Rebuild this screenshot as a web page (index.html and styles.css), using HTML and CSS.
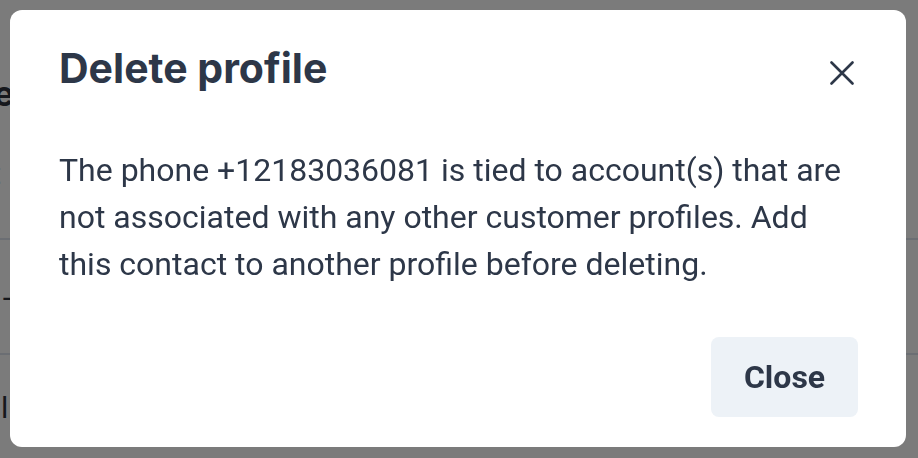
FILE: index.html
```html
<!DOCTYPE html>
<html lang="en">
<head>
    <meta charset="UTF-8">
    <meta name="viewport" content="width=device-width, initial-scale=1.0">
    <title>Delete profile</title>
    <link rel="stylesheet" href="styles.css">
</head>
<body>
    <div class="page">
        <div class="page-title">Profile</div>
        <div class="page-row row-one">Contact</div>
        <div class="page-row row-two">– –</div>
        <div class="page-row row-three">linked</div>
    </div>

    <div class="overlay">
        <div class="modal">
            <div class="modal-header">
                <h2 class="modal-title">Delete profile</h2>
                <button class="close-x" aria-label="Close">
                    <svg width="24" height="24" viewBox="0 0 24 24">
                        <path d="M1.5 1.5 L22.5 22.5 M22.5 1.5 L1.5 22.5" stroke="#2d3748" stroke-width="2.6" stroke-linecap="round"/>
                    </svg>
                </button>
            </div>
            <div class="modal-body">
                The phone +12183036081 is tied to account(s) that are not associated with any other customer profiles. Add this contact to another profile before deleting.
            </div>
            <div class="modal-footer">
                <button class="btn-close">Close</button>
            </div>
        </div>
    </div>
</body>
</html>
```

FILE: styles.css
```css
*{
    margin: 0;
    padding: 0;
    box-sizing: border-box;
}
body {
    font-family: Roboto, "Liberation Sans", sans-serif;
    background: #7b7b7b;
    width: 918px;
    height: 458px;
    overflow: hidden;
}
/* page behind the dimmed overlay */
.page {
    color: #16181d;
    width: 118px;
    margin-left: -104px;
    text-align: right;
}
.page-title {
    font-family: Inter, sans-serif;
    font-weight: 700;
    font-size: 34px;
    line-height: 40px;
    padding-top: 74px;
    height: 130px;
}
.page-row {
    font-size: 30px;
    line-height: 40px;
    width: 1040px;
    text-align: left;
    border-bottom: 2px solid #6b6e73;
}
.row-one {
    height: 110px;
    padding-top: 24px;
}
.row-two {
    height: 115px;
    padding-top: 39px;
    padding-left: 105px;
}
.row-three {
    padding-top: 33px;
    padding-left: 105px;
    border-bottom: none;
}
.overlay {
    position: fixed;
    inset: 0;
    display: flex;
    padding: 10px 12px 11px 10px;
}
.modal {
    flex: 1;
    background: #fff;
    border-radius: 12px;
    display: flex;
    flex-direction: column;
    color: #2d3748;
}
.modal-header {
    display: flex;
    justify-content: space-between;
    align-items: flex-start;
    padding: 34px 48px 0 49px;
}
.modal-title {
    font-family: Inter, sans-serif;
    font-weight: 700;
    font-size: 41px;
    line-height: 48px;
}
.close-x {
    display: flex;
    padding: 0;
    background: none;
    border: none;
    width: 24px;
    height: 24px;
    margin-top: 17px;
    margin-right: 4px;
    cursor: pointer;
}
.close-x svg {
    display: block;
}
.modal-body {
    flex: 1;
    padding: 55px 48px 0 49px;
    font-size: 32px;
    line-height: 47px;
}
.modal-footer {
    display: flex;
    justify-content: flex-end;
    padding: 0 48px 30px;
}
.btn-close {
    width: 147px;
    height: 80px;
    border: none;
    border-radius: 8px;
    background: #edf2f7;
    color: #2d3748;
    font-family: Roboto, sans-serif;
    font-weight: 700;
    font-size: 32px;
    cursor: pointer;
}
```
